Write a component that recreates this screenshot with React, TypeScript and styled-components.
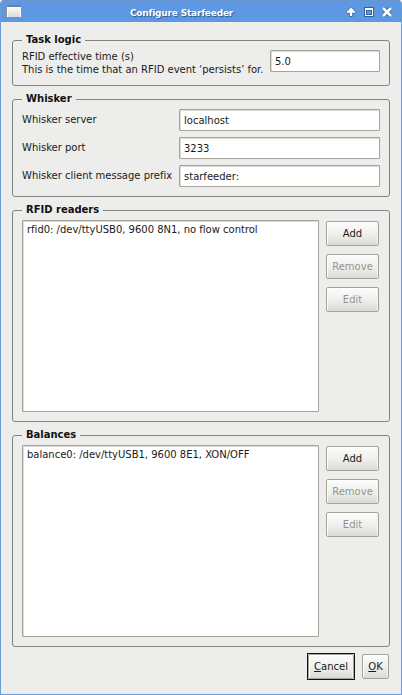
import React from "react";
import styled, { createGlobalStyle } from "styled-components";

const GlobalStyle = createGlobalStyle`
  body {
    margin: 0;
    background: #fff;
  }
  *, *::before, *::after {
    box-sizing: border-box;
  }
`;

const Window = styled.div`
  display: flex;
  flex-direction: column;
  width: 402px;
  height: 695px;
  border: 1px solid #6c9bdb;
  border-top: 0;
  border-radius: 4px 4px 0 0;
  overflow: hidden;
  background: #ededeb;
  color: #1a1a1a;
  font: 10px/13px "DejaVu Sans", sans-serif;
  letter-spacing: -0.01px;
  white-space: nowrap;
`;

const TitleBar = styled.header`
  display: flex;
  align-items: center;
  flex: none;
  height: 22px;
  margin: 0 -1px;
  padding: 1px 9px 0 6px;
  border-top: 1px solid #6a96cf;
  background: #5e98e2;
`;

const Title = styled.h1`
  flex: 1;
  margin: 2px 0 0;
  padding-right: 4px;
  text-align: center;
  color: #fff;
  font-size: 9px;
  line-height: 13px;
  letter-spacing: -0.2px;
  text-shadow: 1px 1px 1px #2d5590;
`;

const WindowControls = styled.div`
  display: flex;
  gap: 6px;

  svg {
    display: block;
  }
`;

const Body = styled.main`
  display: flex;
  flex-direction: column;
  gap: 7px;
  padding: 12px 11px 0;
`;

const Group = styled.fieldset<{ $height: number }>`
  height: ${(p) => p.$height}px;
  min-width: 0;
  margin: 0;
  padding: 3px 9px 0;
  border: 1px solid #828280;
  border-radius: 3px;
`;

const GroupTitle = styled.legend`
  height: 13px;
  padding: 0 4px;
  font-weight: bold;
  line-height: 12px;
  color: #111;
`;

const FieldRow = styled.label`
  display: flex;
  align-items: center;
  justify-content: space-between;
  height: 22px;

  & + & {
    margin-top: 6px;
  }
`;

const Caption = styled.span<{ $multiline?: boolean }>`
  padding-top: ${(p) => (p.$multiline ? 4 : 0)}px;
  padding-bottom: ${(p) => (p.$multiline ? 0 : 1)}px;
`;

const Input = styled.input<{ $width: number }>`
  width: ${(p) => p.$width}px;
  height: 22px;
  margin: 0;
  padding: 1px 4px 0;
  border: 1px solid #a3a398;
  border-radius: 1px;
  outline: 0;
  background: #fff;
  box-shadow: inset 1px 1px 0 #dcdcd8;
  color: #1a1a1a;
  font: inherit;
`;

const ListLayout = styled.div`
  display: flex;
  gap: 7px;
`;

const ListBox = styled.ul`
  width: 297px;
  height: 192px;
  margin: 0;
  padding: 2px 4px;
  border: 1px solid #a3a398;
  border-radius: 1px;
  background: #fff;
  box-shadow: inset 1px 1px 0 #dcdcd8;
  list-style: none;
`;

const ButtonColumn = styled.div`
  display: flex;
  flex-direction: column;
  gap: 8px;
  padding-top: 1px;
`;

const Button = styled.button<{ $width: number }>`
  width: ${(p) => p.$width}px;
  height: 25px;
  padding: 0;
  border: 1px solid #a3a398;
  border-radius: 2px;
  background: linear-gradient(#fcfcfc, #f0f0ee 50%, #dadad5);
  box-shadow: inset 1px 1px 0 #fff, inset -1px 0 0 #f3f3f1;
  color: #1a1a1a;
  font: inherit;

  &:disabled {
    color: #94948f;
  }
`;

const DefaultFrame = styled.span`
  display: flex;
  border: 1px solid #111;
  background: #ededeb;
`;

const Footer = styled.footer`
  display: flex;
  justify-content: flex-end;
  align-items: center;
  gap: 7px;
  height: 27px;
  margin-top: -1px;
  padding-right: 1px;
`;

const Mnemonic = styled.span`
  text-decoration: underline;
  text-underline-offset: 1px;
  text-decoration-thickness: 1px;
`;

const WindowIcon = () => (
  <svg width="16" height="15" viewBox="0 0 16 15">
    <defs>
      <linearGradient id="paper" x1="0" y1="0" x2="0" y2="1">
        <stop offset="0" stopColor="#fff" />
        <stop offset="1" stopColor="#d9dad5" />
      </linearGradient>
    </defs>
    <rect x="0.5" y="0.5" width="15" height="12" rx="1" fill="url(#paper)" stroke="#8a8f91" />
    <path d="M1 1H15" stroke="#66809f" strokeWidth="2" />
    <path d="M1.5 2.5V12M14.5 2.5V12" stroke="#fff" />
  </svg>
);

const RaiseIcon = () => (
  <svg width="12" height="12" viewBox="0 0 12 12">
    <path
      d="M6 2L9.8 5.8V6.8H7V10H5V6.8H2.2V5.8Z"
      fill="none"
      stroke="#3f70b2"
      strokeWidth="2"
      strokeLinejoin="round"
    />
    <path d="M6 1.6L10.2 5.8V6.8H7.1V10H4.9V6.8H1.8V5.8Z" fill="#fff" />
  </svg>
);

const MaximizeIcon = () => (
  <svg width="12" height="12" viewBox="0 0 12 12">
    <path d="M1 1H11V11H1Z" fill="#32619f" />
    <path d="M2 2H10V10H2Z" fill="#fff" />
    <path d="M3 4H9V9H3Z" fill="#32619f" />
    <path d="M4 5H8V8H4Z" fill="#5e98e2" />
  </svg>
);

const CloseIcon = () => (
  <svg width="12" height="12" viewBox="0 0 12 12">
    <path d="M2 2L10 10M10 2L2 10" stroke="#32619f" strokeWidth="4" />
    <path d="M2 2L10 10M10 2L2 10" stroke="#fff" strokeWidth="2.6" />
  </svg>
);

const whiskerFields = [
  { label: "Whisker server", value: "localhost" },
  { label: "Whisker port", value: "3233" },
  { label: "Whisker client message prefix", value: "starfeeder:" },
];

const DeviceGroup = ({ title, items }: { title: string; items: string[] }) => (
  <Group $height={218}>
    <GroupTitle>{title}</GroupTitle>
    <ListLayout>
      <ListBox>
        {items.map((item) => (
          <li key={item}>{item}</li>
        ))}
      </ListBox>
      <ButtonColumn>
        <Button $width={53}>Add</Button>
        <Button $width={53} disabled>Remove</Button>
        <Button $width={53} disabled>Edit</Button>
      </ButtonColumn>
    </ListLayout>
  </Group>
);

export default function App() {
  return (
    <>
      <GlobalStyle />
      <Window>
        <TitleBar>
          <WindowIcon />
          <Title>Configure Starfeeder</Title>
          <WindowControls>
            <RaiseIcon />
            <MaximizeIcon />
            <CloseIcon />
          </WindowControls>
        </TitleBar>
        <Body>
          <Group $height={52}>
            <GroupTitle>Task logic</GroupTitle>
            <FieldRow>
              <Caption $multiline>
                RFID effective time (s)
                <br />
                This is the time that an RFID event ‘persists’ for.
              </Caption>
              <Input $width={110} defaultValue="5.0" />
            </FieldRow>
          </Group>
          <Group $height={104}>
            <GroupTitle>Whisker</GroupTitle>
            {whiskerFields.map((field) => (
              <FieldRow key={field.label}>
                <Caption>{field.label}</Caption>
                <Input $width={201} defaultValue={field.value} />
              </FieldRow>
            ))}
          </Group>
          <DeviceGroup title="RFID readers" items={["rfid0: /dev/ttyUSB0, 9600 8N1, no flow control"]} />
          <DeviceGroup title="Balances" items={["balance0: /dev/ttyUSB1, 9600 8E1, XON/OFF"]} />
          <Footer>
            <DefaultFrame>
              <Button $width={46}>
                <Mnemonic>C</Mnemonic>ancel
              </Button>
            </DefaultFrame>
            <Button $width={27}>
              <Mnemonic>O</Mnemonic>K
            </Button>
          </Footer>
        </Body>
      </Window>
    </>
  );
}
